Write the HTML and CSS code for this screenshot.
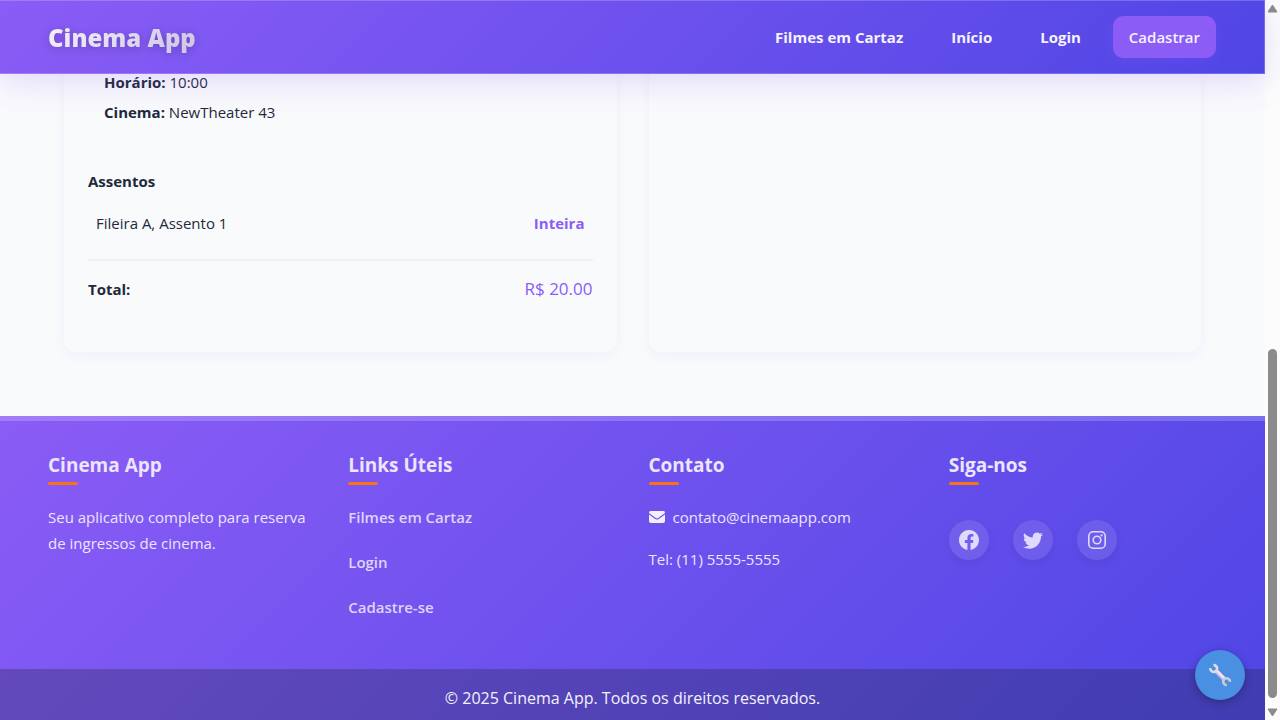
FILE: index.html
```html
<!DOCTYPE html>
<html lang="pt-BR">
<head>
<meta charset="utf-8">
<meta name="viewport" content="width=device-width, initial-scale=1">
<title>Cinema App</title>
<link rel="stylesheet" href="styles.css">
</head>
<body>
<div class="page">
  <header class="header">
    <a class="logo" href="#">Cinema App</a>
    <nav class="nav">
      <a class="nav-link" href="#">Filmes em Cartaz</a>
      <a class="nav-link" href="#">Início</a>
      <a class="nav-link" href="#">Login</a>
      <a class="nav-link nav-cta" href="#">Cadastrar</a>
    </nav>
  </header>

  <main class="main">
    <section class="card">
      <div class="session">
        <p><strong>Horário:</strong> 10:00</p>
        <p><strong>Cinema:</strong> NewTheater 43</p>
      </div>
      <h3 class="seats-title">Assentos</h3>
      <div class="seat">
        <span>Fileira A, Assento 1</span>
        <span class="seat-type">Inteira</span>
      </div>
      <div class="total">
        <strong>Total:</strong>
        <span class="total-price">R$ 20.00</span>
      </div>
    </section>
    <section class="card"></section>
  </main>

  <footer class="footer">
    <div class="footer-columns">
      <section>
        <h3 class="footer-title">Cinema App</h3>
        <p class="footer-text">Seu aplicativo completo para reserva de ingressos de cinema.</p>
      </section>
      <section>
        <h3 class="footer-title">Links Úteis</h3>
        <nav class="footer-links">
          <a href="#">Filmes em Cartaz</a>
          <a href="#">Login</a>
          <a href="#">Cadastre-se</a>
        </nav>
      </section>
      <section>
        <h3 class="footer-title">Contato</h3>
        <div class="contact">
          <p class="contact-mail">
            <svg width="16" height="16" viewBox="0 0 16 16" aria-hidden="true"><path fill="#f3effe" d="M1.5 2h13A1.5 1.5 0 0 1 16 3.5c0 .4-.2.8-.6 1.1L9.2 9.1Q8 10 6.8 9.1L.6 4.6C.2 4.3 0 3.9 0 3.500A1.500 1.500 0 0 1 1.500 2zM0 5.500l6.200 4.500Q8 11.200 9.800 10L16 5.500V12a2 2 0 0 1-2 2H2a2 2 0 0 1-2-2z"/></svg>
            contato@cinemaapp.com
          </p>
          <p>Tel: (11) 5555-5555</p>
        </div>
      </section>
      <section>
        <h3 class="footer-title">Siga-nos</h3>
        <div class="social">
          <a href="#" aria-label="Facebook"><svg width="20" height="20" viewBox="0 0 16 16" fill="currentColor"><path d="M16 8.049c0-4.446-3.582-8.05-8-8.05C3.58 0-.002 3.603-.002 8.05c0 4.017 2.926 7.347 6.75 7.951v-5.625h-2.03V8.05H6.75V6.275c0-2.017 1.195-3.131 3.022-3.131.876 0 1.791.157 1.791.157v1.98h-1.009c-.993 0-1.303.621-1.303 1.258v1.51h2.218l-.354 2.326H9.25V16c3.824-.604 6.75-3.934 6.75-7.951"/></svg></a>
          <a href="#" aria-label="Twitter"><svg width="20" height="20" viewBox="0 0 16 16" fill="currentColor"><path d="M5.026 15c6.038 0 9.341-5.003 9.341-9.334q.002-.211-.006-.422A6.7 6.7 0 0 0 16 3.542a6.7 6.7 0 0 1-1.889.518 3.3 3.3 0 0 0 1.447-1.817 6.5 6.5 0 0 1-2.087.793A3.286 3.286 0 0 0 7.875 6.03a9.32 9.32 0 0 1-6.767-3.429 3.29 3.29 0 0 0 1.018 4.382A3.3 3.3 0 0 1 .64 6.575v.045a3.29 3.29 0 0 0 2.632 3.218 3.2 3.2 0 0 1-.865.115 3 3 0 0 1-.614-.057 3.28 3.28 0 0 0 3.067 2.277A6.6 6.6 0 0 1 .78 13.58a6 6 0 0 1-.78-.045A9.34 9.34 0 0 0 5.026 15"/></svg></a>
          <a href="#" aria-label="Instagram"><svg width="18" height="18" viewBox="0 0 18 18" fill="none" stroke="currentColor" stroke-width="1.6"><rect x="0.8" y="0.8" width="16.4" height="16.4" rx="4.3"/><circle cx="9" cy="9" r="3.8"/><circle cx="13.6" cy="4.400" r="1.100" fill="currentColor" stroke="none"/></svg></a>
        </div>
      </section>
    </div>
    <p class="copyright">© 2025 Cinema App. Todos os direitos reservados.</p>
  </footer>

  <button class="tool-button" type="button" aria-label="Ferramentas">
    <svg width="24" height="24" viewBox="0 0 24 24">
      <path d="m7.500 7.500 9.500 9.500" stroke="#c3aee0" stroke-width="4.400"/>
      <path d="m8 7 9.500 9.500" stroke="#efe2f3" stroke-width="2.800"/>
      <path d="M2.300 5.200A3.400 3.400 0 1 0 5.500 2.100" fill="none" stroke="#e0dce4" stroke-width="2.600"/>
      <path d="M22 18.800A3.400 3.400 0 1 0 18.800 22" fill="none" stroke="#cfc9d3" stroke-width="2.600"/>
    </svg>
  </button>
</div>

<div class="scrollbar" aria-hidden="true">
  <svg width="11" height="9" viewBox="0 0 11 9"><path d="M5.5 1 10 8H1z" fill="#8b8b8b" stroke="#8b8b8b" stroke-linejoin="round"/></svg>
  <div class="scroll-track"><div class="scroll-thumb"></div></div>
  <svg width="11" height="9" viewBox="0 0 11 9"><path d="M5.5 8 10 1H1z" fill="#8b8b8b" stroke="#8b8b8b" stroke-linejoin="round"/></svg>
</div>
</body>
</html>
```

FILE: styles.css
```css
* {
  box-sizing: border-box;
}

body {
  margin: 0;
  display: flex;
  min-height: 100vh;
  background: #f9fafc;
  color: #1e293b;
  font-family: "Segoe UI", "Open Sans", "Noto Sans", sans-serif;
  font-size: 15px;
  line-height: 26px;
}

p,
h3 {
  margin: 0;
}

a {
  color: inherit;
  text-decoration: none;
}

.page {
  position: relative;
  flex: 1;
  display: flex;
  flex-direction: column;
}

.header {
  position: absolute;
  top: 0;
  left: 0;
  right: 0;
  z-index: 2;
  display: flex;
  align-items: center;
  justify-content: space-between;
  padding: 15px 48px;
  border: 1px solid rgba(255, 255, 255, 0.2);
  border-left: 0;
  background: linear-gradient(135deg, #8b5cf6, #4f46e5) border-box;
  box-shadow: 0 8px 32px rgba(139, 92, 246, 0.2);
}

.logo {
  padding-top: 2px;
  font-size: 24px;
  font-weight: 800;
  line-height: 32px;
  background: linear-gradient(135deg, #f5f3f8, #cdc4e4);
  background-clip: text;
  color: transparent;
  filter: drop-shadow(0 2px 4px rgba(0, 0, 0, 0.2));
}

.nav {
  display: flex;
  gap: 16px;
  color: #f5f2fe;
  font-weight: 700;
}

.nav-link {
  padding: 8px 16px;
}

.nav-cta {
  border-radius: 10px;
  background: #8b5cf6;
  box-shadow: 0 4px 15px rgba(139, 92, 246, 0.2);
  font-weight: 600;
}

.main {
  display: grid;
  grid-template-columns: 1fr 1fr;
  gap: 32px;
  padding: 0 64px 64px;
}

.card {
  padding: 69px 24px 50px;
  border-radius: 0 0 12px 12px;
  background: #f9fafc;
  box-shadow: 0 4px 12px rgba(99, 102, 241, 0.06);
}

.session {
  display: flex;
  flex-direction: column;
  gap: 4px;
  padding: 0 16px 43px;
}

.seats-title {
  font-size: 15px;
  font-weight: 700;
}

.seat {
  display: flex;
  justify-content: space-between;
  padding: 16px 8px 23px;
  border-bottom: 2px solid #f0f1f4;
}

.seat-type {
  color: #8b5cf6;
  font-weight: 700;
}

.total {
  display: flex;
  justify-content: space-between;
  padding-top: 15px;
}

.total-price {
  color: #8b5cf6;
  font-size: 17px;
  font-weight: 500;
}

.footer {
  flex: 1;
  display: flex;
  flex-direction: column;
  border-top: 5px solid rgba(255, 255, 255, 0.2);
  background: linear-gradient(135deg, #8b5cf6, #4f46e5) border-box;
  color: #ebe5fd;
}

.footer-columns {
  flex: 1;
  display: grid;
  grid-template-columns: repeat(4, 1fr);
  gap: 32px;
  padding: 31px 48px 48px;
}

.footer-title {
  margin-bottom: 19px;
  font-size: 19px;
  font-weight: 700;
}

.footer-title::after {
  content: "";
  display: block;
  width: 30px;
  height: 3px;
  margin-top: 4px;
  border-radius: 2px;
  background: #f97316;
}

.footer-links {
  display: flex;
  flex-direction: column;
  align-items: flex-start;
  gap: 19px;
  color: #ddd5fb;
  font-weight: 600;
}

.contact {
  display: flex;
  flex-direction: column;
  gap: 16px;
}

.contact-mail {
  display: flex;
  align-items: center;
  gap: 8px;
}

.social {
  display: flex;
  gap: 24px;
  padding-top: 16px;
  color: #dfdafb;
}

.social a {
  display: flex;
  align-items: center;
  justify-content: center;
  width: 40px;
  height: 40px;
  border-radius: 50%;
  background: rgba(255, 255, 255, 0.1);
  box-shadow: 0 4px 8px rgba(0, 0, 0, 0.06);
}

.copyright {
  padding: 16px 16px 9px;
  background: rgba(30, 41, 59, 0.3);
  color: #f4f1fc;
  font-size: 16px;
  line-height: 26px;
  text-align: center;
}

.tool-button {
  position: absolute;
  right: 20px;
  bottom: 20px;
  display: flex;
  align-items: center;
  justify-content: center;
  width: 50px;
  height: 50px;
  padding: 0;
  border: 0;
  border-radius: 50%;
  background: #4a90e2;
  box-shadow: 0 2px 8px rgba(0, 0, 0, 0.3);
}

.scrollbar {
  display: flex;
  flex-direction: column;
  align-items: center;
  width: 15px;
  padding: 4px 0 3px;
  background: #fcfcfc;
}

.scroll-track {
  flex: 1;
  display: flex;
  flex-direction: column;
  justify-content: flex-end;
  padding-bottom: 10px;
}

.scroll-thumb {
  width: 9px;
  height: 51%;
  border-radius: 5px;
  background: #8b8b8b;
}
```
